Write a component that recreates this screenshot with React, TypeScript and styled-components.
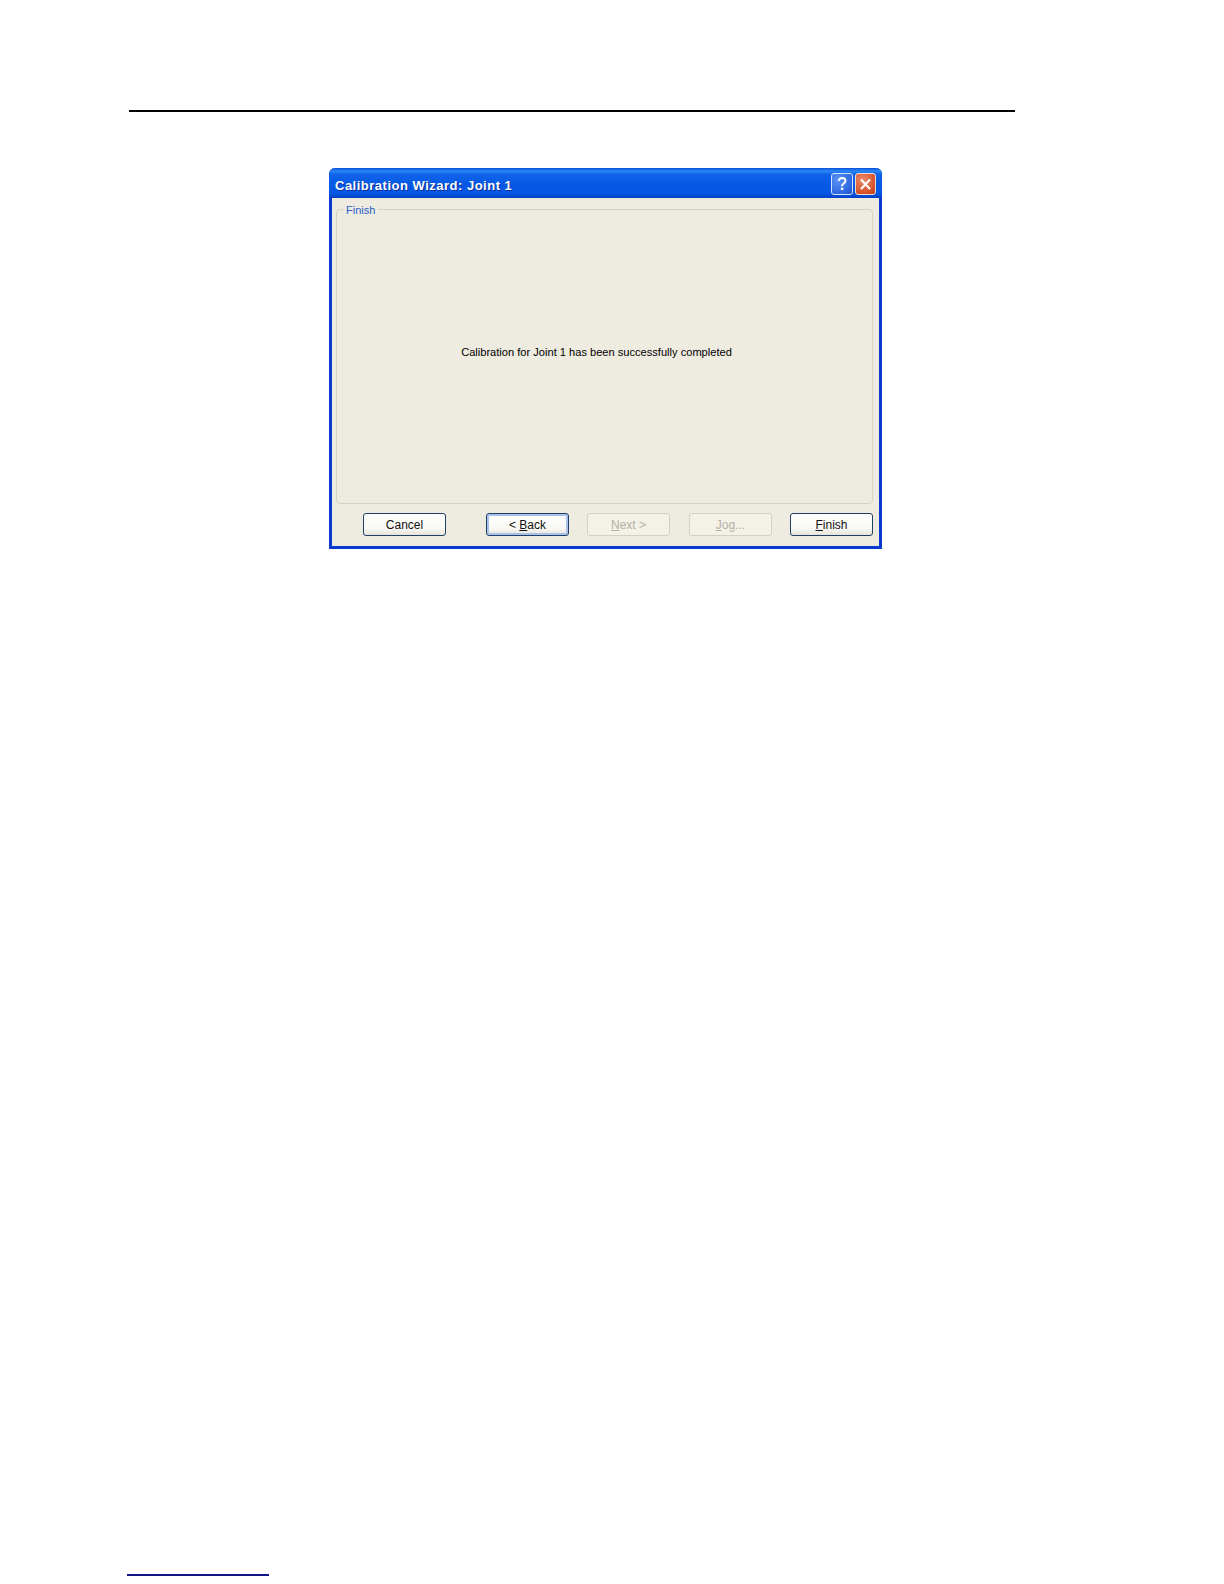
import React from 'react';
import styled, { createGlobalStyle } from 'styled-components';

const GlobalStyle = createGlobalStyle`
  html, body {
    margin: 0;
    padding: 0;
    background: #fff;
  }
`;

type WizardButton = {
  label: React.ReactNode;
  disabled?: boolean;
  focused?: boolean;
  gapBefore: number;
};

const buttons: WizardButton[] = [
  { label: 'Cancel', gapBefore: 0 },
  {
    label: (
      <>
        &lt; <u>B</u>ack
      </>
    ),
    focused: true,
    gapBefore: 40,
  },
  {
    label: (
      <>
        <u>N</u>ext &gt;
      </>
    ),
    disabled: true,
    gapBefore: 18,
  },
  {
    label: (
      <>
        <u>J</u>og...
      </>
    ),
    disabled: true,
    gapBefore: 19,
  },
  {
    label: (
      <>
        <u>F</u>inish
      </>
    ),
    gapBefore: 18,
  },
];

const App: React.FC = () => {
  return (
    <Page>
      <GlobalStyle />
      <HeaderRule />
      <Window>
        <TitleBar>
          <TitleText>Calibration Wizard: Joint 1</TitleText>
          <TitleButtons>
            <HelpButton>
              <svg width="22" height="22" viewBox="0 0 22 22">
                <path
                  d="M7.5 7.6C7.8 5.4 9.3 4.4 11.2 4.4C13.4 4.4 14.8 5.7 14.8 7.5C14.8 9.1 13.8 9.9 12.6 10.7C11.5 11.4 11 12 11 13.4"
                  fill="none"
                  stroke="#fff"
                  strokeWidth="2.2"
                />
                <rect x="9.8" y="15" width="2.6" height="2.6" fill="#fff" />
              </svg>
            </HelpButton>
            <CloseButton>
              <svg width="21" height="22" viewBox="0 0 21 22">
                <path d="M5.5 6L15.5 16.5M15.5 6L5.5 16.5" stroke="#fff" strokeWidth="2.4" />
              </svg>
            </CloseButton>
          </TitleButtons>
        </TitleBar>
        <Body>
          <GroupBox>
            <GroupLegend>Finish</GroupLegend>
            <MessageArea>
              <Message>Calibration for Joint 1 has been successfully completed</Message>
            </MessageArea>
          </GroupBox>
          <ButtonRow>
            {buttons.map((button, index) => (
              <ActionButton
                key={index}
                type="button"
                disabled={button.disabled}
                $focused={button.focused}
                $gapBefore={button.gapBefore}
              >
                {button.label}
              </ActionButton>
            ))}
          </ButtonRow>
        </Body>
      </Window>
      <FooterRule />
    </Page>
  );
};

const Page = styled.div`
  display: flex;
  flex-direction: column;
  height: 1584px;
  padding: 110px 209px 8px 129px;
  box-sizing: border-box;
  background: #fff;
  font-family: 'Liberation Sans', Arial, sans-serif;
`;

const HeaderRule = styled.div`
  height: 2px;
  background: #000;
`;

const Window = styled.div`
  display: flex;
  flex-direction: column;
  align-self: flex-start;
  width: 553px;
  height: 381px;
  margin: 56px 0 0 200px;
  box-sizing: border-box;
  border: 3px solid #0a3ad0;
  border-top: none;
  border-radius: 6px 6px 0 0;
  background: #eeebe0;
`;

const TitleBar = styled.div`
  display: flex;
  align-items: center;
  justify-content: space-between;
  flex: none;
  height: 30px;
  margin: 0 -3px;
  padding: 0 6px 0 6px;
  border-radius: 6px 6px 0 0;
  background: linear-gradient(
    180deg,
    #0a50d8 0%,
    #2a86f5 10%,
    #0f62e8 22%,
    #0558e4 60%,
    #0757e2 85%,
    #0340c4 100%
  );
`;

const TitleText = styled.span`
  padding-top: 4px;
  color: #fff;
  font-size: 13px;
  font-weight: 700;
  letter-spacing: 0.5px;
  text-shadow: 1px 1px 0 #0a2f9e;
`;

const TitleButtons = styled.div`
  display: flex;
  gap: 2px;
  margin-top: 2px;
`;

const HelpButton = styled.div`
  width: 22px;
  height: 22px;
  box-sizing: border-box;
  display: flex;
  align-items: center;
  justify-content: center;
  border: 1px solid #d4e2fb;
  border-radius: 3px;
  background: radial-gradient(circle at 30% 30%, #5a94f5, #2a63dc 75%, #1f4fc8);
`;

const CloseButton = styled.div`
  width: 21px;
  height: 22px;
  box-sizing: border-box;
  display: flex;
  align-items: center;
  justify-content: center;
  border: 1px solid #eedcd4;
  border-radius: 3px;
  background: radial-gradient(circle at 35% 30%, #ea8a68, #d9552f 65%, #c23f1c);
`;

const Body = styled.div`
  display: flex;
  flex: 1;
  flex-direction: column;
  min-height: 0;
  padding: 3px 6px 0 4px;
`;

const GroupBox = styled.fieldset`
  height: 303px;
  margin: 0;
  padding: 0;
  box-sizing: border-box;
  border: 1px solid #d6d3c2;
  border-radius: 4px;
`;

const GroupLegend = styled.legend`
  margin-left: 7px;
  padding: 2px 3px 0 2px;
  color: #2a5cc8;
  font-size: 11px;
  line-height: 14px;
`;

const MessageArea = styled.div`
  display: flex;
  align-items: center;
  justify-content: center;
  height: 270px;
  padding-right: 16px;
`;

const Message = styled.div`
  color: #000;
  font-size: 11.1px;
  white-space: nowrap;
`;

const ButtonRow = styled.div`
  display: flex;
  margin-top: 9px;
  padding-left: 27px;
`;

const ActionButton = styled.button<{ $focused?: boolean; $gapBefore: number }>`
  width: 83px;
  height: 23px;
  margin: 0 0 0 ${(props) => props.$gapBefore}px;
  padding: 0;
  box-sizing: border-box;
  border: 1px solid #1f3f66;
  border-radius: 3px;
  background: linear-gradient(180deg, #ffffff 0%, #f8f8f4 70%, #e6e3d8 100%);
  box-shadow: ${(props) => (props.$focused ? 'inset 0 0 0 2px #a9c2ea' : 'none')};
  color: #111;
  font-family: inherit;
  font-size: 12px;

  &:disabled {
    border-color: #d3d1c4;
    background: #f3f1e8;
    color: #b3b2a6;
  }
`;

const FooterRule = styled.div`
  width: 142px;
  height: 2px;
  margin: auto 0 0 -2px;
  background: #14148a;
`;

export default App;
